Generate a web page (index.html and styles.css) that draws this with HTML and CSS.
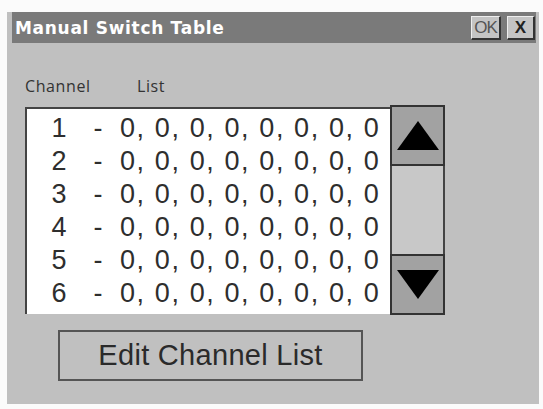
FILE: index.html
```html
<!DOCTYPE html>
<html>
<head>
<meta charset="utf-8">
<link rel="stylesheet" href="styles.css">
</head>
<body>
<div class="window">
  <div class="titlebar">
    <span class="title">Manual Switch Table</span>
    <div class="tbtns">
      <span class="tbtn ok">OK</span>
      <span class="tbtn close">X</span>
    </div>
  </div>
  <div class="content">
    <div class="labels">
      <span class="lbl-ch">Channel</span>
      <span class="lbl-list">List</span>
    </div>
    <div class="listrow">
      <div class="listbox">
        <div class="row"><span class="num">1</span><span class="dash">-</span><span class="vals">0, 0, 0, 0, 0, 0, 0, 0</span></div>
        <div class="row"><span class="num">2</span><span class="dash">-</span><span class="vals">0, 0, 0, 0, 0, 0, 0, 0</span></div>
        <div class="row"><span class="num">3</span><span class="dash">-</span><span class="vals">0, 0, 0, 0, 0, 0, 0, 0</span></div>
        <div class="row"><span class="num">4</span><span class="dash">-</span><span class="vals">0, 0, 0, 0, 0, 0, 0, 0</span></div>
        <div class="row"><span class="num">5</span><span class="dash">-</span><span class="vals">0, 0, 0, 0, 0, 0, 0, 0</span></div>
        <div class="row"><span class="num">6</span><span class="dash">-</span><span class="vals">0, 0, 0, 0, 0, 0, 0, 0</span></div>
      </div>
      <div class="scrollbar">
        <div class="sbtn up"><svg width="42" height="29" viewBox="0 0 42 29"><polygon points="21,0 42,29 0,29" fill="#000"/></svg></div>
        <div class="track"></div>
        <div class="sbtn down"><svg width="42" height="29" viewBox="0 0 42 29"><polygon points="0,0 42,0 21,29" fill="#000"/></svg></div>
      </div>
    </div>
    <div class="btnrow">
      <div class="editbtn">Edit Channel List</div>
    </div>
  </div>
</div>
</body>
</html>
```
FILE: styles.css
```css
html, body {
  margin: 0;
  padding: 0;
  background: #fbfbfb;
  width: 543px;
  height: 409px;
  overflow: hidden;
}
body {
  padding: 12px 4px 5px 7px;
  box-sizing: border-box;
  font-family: "DejaVu Sans", "Liberation Sans", sans-serif;
}
.window {
  width: 532px;
  height: 392px;
  background: #c0c0c0;
  box-sizing: border-box;
  padding-left: 5px;
  padding-right: 3px;
}
.titlebar {
  height: 31px;
  background: #7a7a7a;
  display: flex;
  align-items: center;
  justify-content: space-between;
  padding: 0 1px 0 3px;
}
.title {
  color: #ffffff;
  font-family: "DejaVu Sans", sans-serif;
  font-weight: bold;
  font-size: 17px;
  letter-spacing: 0.7px;
}
.tbtns {
  display: flex;
  gap: 6px;
  align-self: flex-start;
  margin-top: 4px;
}
.tbtn {
  height: 24px;
  box-sizing: border-box;
  background: #c4c4c4;
  border-right: 2px solid #333;
  border-bottom: 2px solid #333;
  border-top: 1px solid #eee;
  border-left: 1px solid #eee;
  display: flex;
  align-items: center;
  justify-content: center;
  font-family: "Liberation Sans", sans-serif;
  font-size: 17px;
  color: #222;
}
.ok { width: 30px; color: #555; letter-spacing: -1px; }
.close { width: 28px; font-weight: bold; }
.content {
  padding: 33px 0 0 13px;
}
.labels {
  display: flex;
  font-family: "Open Sans", sans-serif;
  font-size: 16px;
  letter-spacing: 0.6px;
  color: #333;
  height: 20px;
  line-height: 20px;
}
.lbl-ch { width: 112px; }
.listrow {
  display: flex;
  margin-top: 11px;
}
.listbox {
  width: 365px;
  height: 207px;
  box-sizing: border-box;
  background: #ffffff;
  border-top: 2px solid #444;
  border-left: 2px solid #444;
  padding: 3px 0 0 0;
  display: flex;
  flex-direction: column;
}
.row {
  height: 33px;
  display: flex;
  align-items: center;
  font-family: "Liberation Sans", sans-serif;
  font-size: 27px;
  color: #2e2e2e;
}
.num { width: 40px; margin-left: 12px; text-align: center; }
.dash { width: 38px; text-align: center; }
.vals { margin-left: 3px; letter-spacing: 1.6px; }
.scrollbar {
  width: 55px;
  height: 210px;
  margin-top: -2px;
  display: flex;
  flex-direction: column;
}
.sbtn {
  height: 61px;
  box-sizing: border-box;
  background: #a2a2a2;
  border: 2px solid #333;
  display: flex;
  align-items: center;
  justify-content: center;
}
.track {
  flex: 1;
  background: #c8c8c8;
  border-left: 2px solid #444;
  border-right: 2px solid #444;
}
.btnrow {
  padding: 15px 0 0 33px;
}
.editbtn {
  width: 305px;
  height: 51px;
  box-sizing: border-box;
  border: 2px solid #555;
  display: flex;
  align-items: center;
  justify-content: center;
  font-family: "Liberation Sans", sans-serif;
  font-size: 29px;
  letter-spacing: 0.3px;
  color: #2a2a2a;
}
```
